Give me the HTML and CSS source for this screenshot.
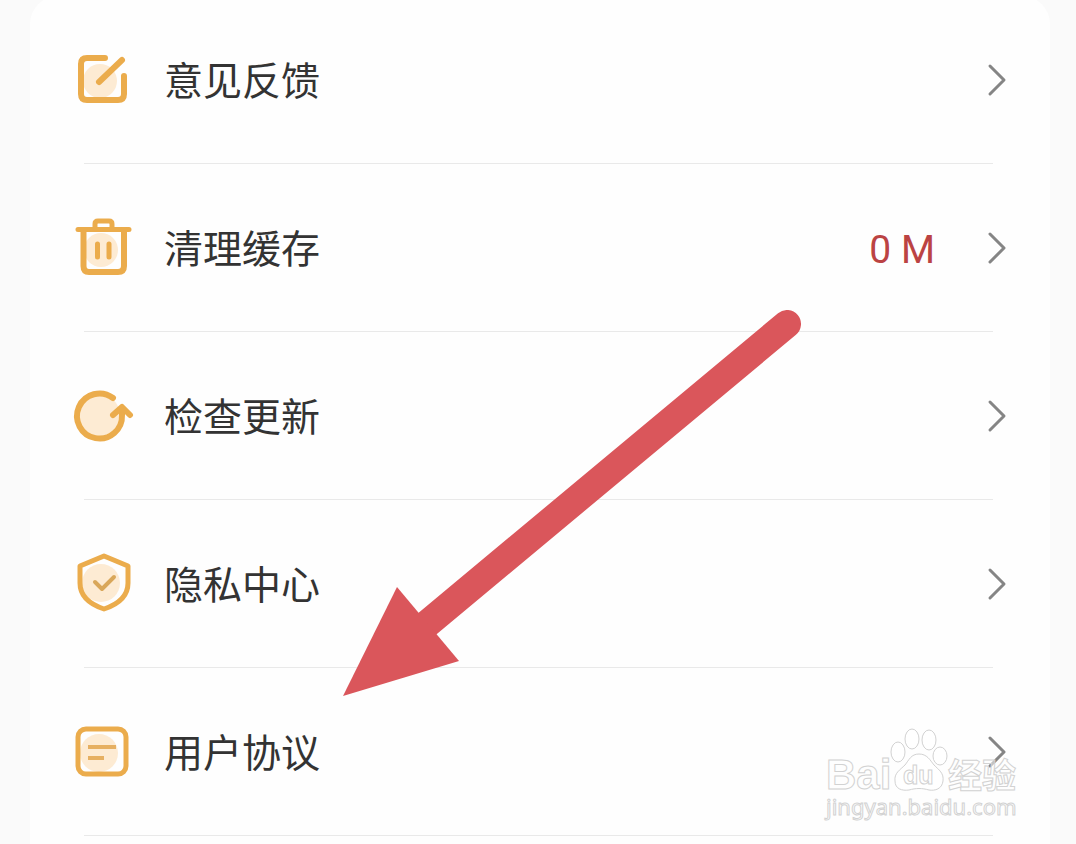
FILE: index.html
```html
<!DOCTYPE html>
<html lang="zh-CN">
<head>
    <meta charset="UTF-8">
    <meta name="viewport" content="width=device-width, initial-scale=1.0">
    <title>设置</title>
    <link rel="stylesheet" href="styles.css">
</head>
<body>
    <main class="card">
        <ul class="menu">
            <li>
                <a href="#feedback">
                    <svg class="icon" viewBox="0 0 64 64" aria-hidden="true">
                        <circle class="tint" cx="30" cy="33" r="17"/>
                        <path d="M35 10H17Q11 10 11 16V46Q11 52 17 52H48Q54 52 54 46V28"/>
                        <path d="M29 34L52 12"/>
                    </svg>
                    <span class="label">意见反馈</span>
                    <svg class="chevron" viewBox="0 0 20 34" aria-hidden="true"><path d="M3 3L17 17L3 31"/></svg>
                </a>
            </li>
            <li>
                <a href="#cache">
                    <svg class="icon" viewBox="0 0 64 64" aria-hidden="true">
                        <circle class="tint" cx="31" cy="34" r="17"/>
                        <path class="medium" d="M8 13.5H59M25 13V8Q25 5 28 5H39Q42 5 42 8V13"/>
                        <path d="M13.500 14V50Q13.500 56 19 56H48Q54 56 54 50V14"/>
                        <path class="medium" d="M27.500 28V41M39 28V41"/>
                    </svg>
                    <span class="label">清理缓存</span>
                    <span class="value">0 M</span>
                    <svg class="chevron" viewBox="0 0 20 34" aria-hidden="true"><path d="M3 3L17 17L3 31"/></svg>
                </a>
            </li>
            <li>
                <a href="#update">
                    <svg class="icon" viewBox="0 0 64 64" aria-hidden="true">
                        <circle class="tint" cx="29" cy="31" r="21"/>
                        <path d="M43 14A22.500 22.500 0 1 0 52 31V25"/>
                        <path d="M43 31L52 23L60 31"/>
                    </svg>
                    <span class="label">检查更新</span>
                    <svg class="chevron" viewBox="0 0 20 34" aria-hidden="true"><path d="M3 3L17 17L3 31"/></svg>
                </a>
            </li>
            <li>
                <a href="#privacy">
                    <svg class="icon" viewBox="0 0 64 64" aria-hidden="true">
                        <circle class="tint" cx="31" cy="31" r="19"/>
                        <path class="medium" d="M34 4L58 14V31Q58 49 34 57Q10 49 10 31V14Z"/>
                        <path class="check" d="M25 30L32 37L44 25"/>
                    </svg>
                    <span class="label">隐私中心</span>
                    <svg class="chevron" viewBox="0 0 20 34" aria-hidden="true"><path d="M3 3L17 17L3 31"/></svg>
                </a>
            </li>
            <li>
                <a href="#agreement">
                    <svg class="icon" viewBox="0 0 64 64" aria-hidden="true">
                        <circle class="tint" cx="29" cy="33" r="19"/>
                        <rect class="medium" x="8" y="9" width="48" height="45" rx="8"/>
                        <path class="lines" d="M18 27H46M18 38H34"/>
                    </svg>
                    <span class="label">用户协议</span>
                    <svg class="chevron" viewBox="0 0 20 34" aria-hidden="true"><path d="M3 3L17 17L3 31"/></svg>
                </a>
            </li>
            <li class="next"></li>
        </ul>

        <!-- red pointer to the agreement row -->
        <svg class="pointer" viewBox="0 0 460 388" aria-hidden="true">
            <path class="shaft" d="M444 14L84 314"/>
            <path class="head" d="M0 386L54 277L116 351Z"/>
        </svg>

        <svg class="watermark" viewBox="0 0 200 100" role="img" aria-label="Baidu 经验">
            <text class="wm-bai" x="3" y="61">Bai</text>
            <ellipse cx="75" cy="24" rx="7" ry="10"/>
            <ellipse cx="89" cy="11" rx="7" ry="10"/>
            <ellipse cx="106" cy="12" rx="7" ry="10"/>
            <ellipse cx="117" cy="28" rx="7" ry="9"/>
            <path d="M96 26C104 26 107 32 111 37C116 42 121 45 120 53C119 61 112 63 106 62C99 60 93 60 86 62C79 63 72 61 72 53C71 45 77 42 82 37C86 32 88 26 96 26Z"/>
            <text class="wm-du" x="80" y="56">du</text>
            <text class="wm-cn" x="125" y="60">经验</text>
            <text class="wm-url" x="3" y="87">jingyan.baidu.com</text>
        </svg>
    </main>
</body>
</html>
```
FILE: styles.css
```css
* {
    box-sizing: border-box;
}
body {
    margin: 0;
    background-color: #fafafa;
    font-family: "Noto Sans CJK SC", sans-serif;
    color: #333;
    overflow: hidden;
}
.card {
    position: relative;
    margin: -4px 26px 0 30px;
    background-color: #fefefe;
    border-radius: 28px;
}
.menu {
    list-style: none;
    margin: 0;
    padding: 0;
}
.menu a {
    display: flex;
    align-items: center;
    height: 167px;
    padding: 0 43px 0 40px;
    color: inherit;
    text-decoration: none;
}
.menu li::after {
    content: "";
    display: block;
    height: 1px;
    margin: 0 57px 0 54px;
    background-color: #e9e9e9;
}
.menu .next {
    height: 40px;
}
.menu .next::after {
    display: none;
}
.icon {
    flex: none;
    width: 64px;
    height: 64px;
    margin-right: 30px;
    fill: none;
    stroke: #ebac4c;
    stroke-width: 6;
    stroke-linecap: round;
    stroke-linejoin: round;
}
.icon .tint {
    fill: #fdebd3;
    stroke: none;
}
.icon .medium {
    stroke-width: 5;
}
.icon .check {
    stroke: #d9a75a;
    stroke-width: 4;
}
.icon .lines {
    stroke: #e6b062;
    stroke-width: 4;
    stroke-linecap: butt;
}
.label {
    flex: 1;
    padding-bottom: 4px;
    font-size: 39px;
    line-height: 56px;
}
.value {
    margin-right: 52px;
    padding-top: 4px;
    font-family: Roboto, sans-serif;
    font-size: 39px;
    line-height: 56px;
    color: #bb4343;
}
.chevron {
    flex: none;
    width: 20px;
    height: 34px;
    fill: none;
    stroke: #858585;
    stroke-width: 3;
    stroke-linecap: round;
    stroke-linejoin: round;
}
.pointer {
    position: absolute;
    left: 313px;
    top: 314px;
    width: 460px;
    height: 388px;
}
.pointer .shaft {
    stroke: #da565b;
    stroke-width: 28;
    stroke-linecap: round;
}
.pointer .head {
    fill: #da565b;
}
.watermark {
    position: absolute;
    right: 27px;
    top: 732px;
    width: 200px;
    height: 100px;
    overflow: visible;
    fill: rgba(255, 255, 255, 0.5);
    stroke: #d2d2d2;
    stroke-width: 1;
}
.wm-bai {
    font: bold 42px "Liberation Sans", sans-serif;
}
.wm-du {
    font: bold 25px "Liberation Sans", sans-serif;
}
.wm-cn {
    font: bold 34px "Noto Sans CJK SC", sans-serif;
}
.wm-url {
    font: 22px "Noto Sans", sans-serif;
}
```
